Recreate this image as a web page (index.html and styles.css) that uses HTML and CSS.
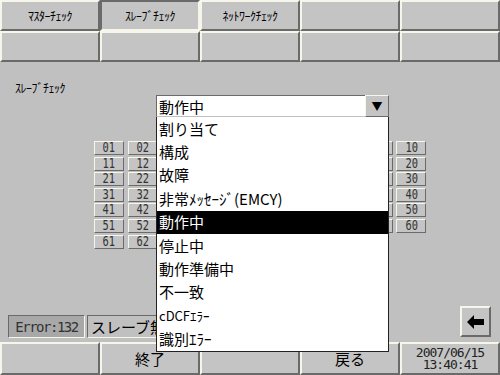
FILE: index.html
```html
<!doctype html>
<html lang="ja">
<head>
  <meta charset="UTF-8">
  <title>スレーブチェック</title>
  <link rel="stylesheet" href="styles.css">
</head>
<body>
  <div class="screen">
    <nav class="tabs">
      <div class="btn tab">ﾏｽﾀｰﾁｪｯｸ</div>
      <div class="btn tab on">ｽﾚｰﾌﾞﾁｪｯｸ</div>
      <div class="btn tab">ﾈｯﾄﾜｰｸﾁｪｯｸ</div>
      <div class="btn tab"></div>
      <div class="btn tab"></div>
      <div class="btn tab"></div>
      <div class="btn tab"></div>
      <div class="btn tab"></div>
      <div class="btn tab"></div>
      <div class="btn tab"></div>
    </nav>

    <main class="main">
      <div class="title">ｽﾚｰﾌﾞﾁｪｯｸ</div>

      <div class="nums" id="nums"></div>

      <div class="status">
        <div class="err">Error:132</div>
        <div class="msg">スレーブ無効</div>
        <div class="btn back">
          <svg width="18" height="14" viewBox="0 0 18 14"><path d="M0 7 L7 0 L7 4 L17 4 L17 10 L7 10 L7 14 Z" fill="#000"/></svg>
        </div>
      </div>
    </main>

    <footer class="bottom">
      <div class="btn foot"></div>
      <div class="btn foot">終了</div>
      <div class="btn foot"></div>
      <div class="btn foot">戻る</div>
      <div class="btn foot clock">2007/06/15<br>13:40:41</div>
    </footer>

    <div class="combo">
      <div class="combo_value">
        <span>動作中</span>
        <div class="btn combo_arrow">▼</div>
      </div>
      <ul class="combo_list">
        <li>割り当て</li>
        <li>構成</li>
        <li>故障</li>
        <li>非常ﾒｯｾｰｼﾞ(EMCY)</li>
        <li class="sel">動作中</li>
        <li>停止中</li>
        <li>動作準備中</li>
        <li>不一致</li>
        <li class="small">cDCFｴﾗｰ</li>
        <li>識別ｴﾗｰ</li>
      </ul>
    </div>
  </div>

  <script>
    // slave numbers 01..63, ten per row
    var nums = document.getElementById('nums');
    for (var n = 1; n <= 63; n++) {
      var d = document.createElement('div');
      d.className = 'btn num';
      d.innerHTML = '<span>' + String(n).padStart(2, '0') + '</span>';
      nums.appendChild(d);
    }
  </script>
</body>
</html>
```

FILE: styles.css
```css
body { margin: 0; background: #c0c0c0; font-family: "Noto Sans CJK JP", "DejaVu Sans", sans-serif; color: #000; }

.screen { position: relative; width: 500px; height: 375px; overflow: hidden; background: #c0c0c0; display: flex; flex-direction: column; }

.btn {
  box-sizing: border-box;
  background: #c4c4c4;
  border: 2px solid;
  border-color: #f6f6ea #6a6a6a #6a6a6a #f6f6ea;
  display: flex; align-items: center; justify-content: center;
  }

.tabs { display: grid; grid-template-columns: repeat(5, 100px); grid-template-rows: 31px 31px; }
.tab { font-size: 12px; letter-spacing: -0.5px; }
.tab.on { border-color: #6a6a6a #f6f6ea #f6f6ea #6a6a6a; }

.main { flex: 1; display: flex; flex-direction: column; }
.title { font-size: 12px; letter-spacing: -0.5px; padding: 18px 0 0 15px; height: 16px; line-height: 16px; }

.nums {
  display: grid;
  grid-template-columns: repeat(10, 30px);
  grid-auto-rows: 14px;
  column-gap: 3.6px; row-gap: 1.6px;
  margin: 45px 0 0 94px;
  }
.num { border-width: 1px; font-family: "DejaVu Sans Mono", monospace; font-size: 13px; color: #333; line-height: 12px; }
.num span { display: inline-block; transform: scale(0.8, 1.05); }

.status { display: flex; align-items: flex-end; margin: auto 0 4px 8px; }
.err, .msg { box-sizing: border-box; height: 23px; border: 1px solid; border-color: #6a6a6a #f6f6ea #f6f6ea #6a6a6a; display: flex; align-items: center; margin-right: 2px; }
.err { width: 77px; background: #a8a8a8; color: #333; font-family: "DejaVu Sans Mono", monospace; font-size: 14px; justify-content: center; letter-spacing: -1.5px; }
.msg { width: 110px; padding-left: 3px; font-size: 15px; white-space: nowrap; }
.back { width: 31px; height: 31px; margin-left: auto; margin-right: 9px; margin-bottom: 1px; }

.bottom { display: grid; grid-template-columns: repeat(5, 100px); height: 33px; }
.foot { font-size: 15px; }
.clock { font-family: "DejaVu Sans Mono", monospace; font-size: 13px; line-height: 12px; text-align: center; color: #222; letter-spacing: -1px; }

/* open combo box, lies over the number grid */
.combo { position: absolute; left: 156px; top: 95px; width: 233px; }
.combo_value { box-sizing: border-box; height: 22px; background: #fff; border: 1px solid; border-color: #6a6a6a #c0c0c0 #c0c0c0 #6a6a6a; display: flex; align-items: center; font-size: 15px; padding-left: 2px; }
.combo_value span { flex: 1; }
.combo_arrow { width: 24px; height: 22px; margin-right: -1px; font-size: 11px; border-width: 1px; }
.combo_list { box-sizing: border-box; list-style: none; margin: 0; padding: 0; height: 235px; background: #fff; border: 1px solid #222; border-top: 0; }
.combo_list li { box-sizing: border-box; height: 23.4px; display: flex; align-items: center; line-height: 16px; font-size: 15px; padding-left: 2px; white-space: nowrap; }
.combo_list li.sel { background: #000; color: #fff; }
.combo_list li.small { font-size: 13px; }
```
